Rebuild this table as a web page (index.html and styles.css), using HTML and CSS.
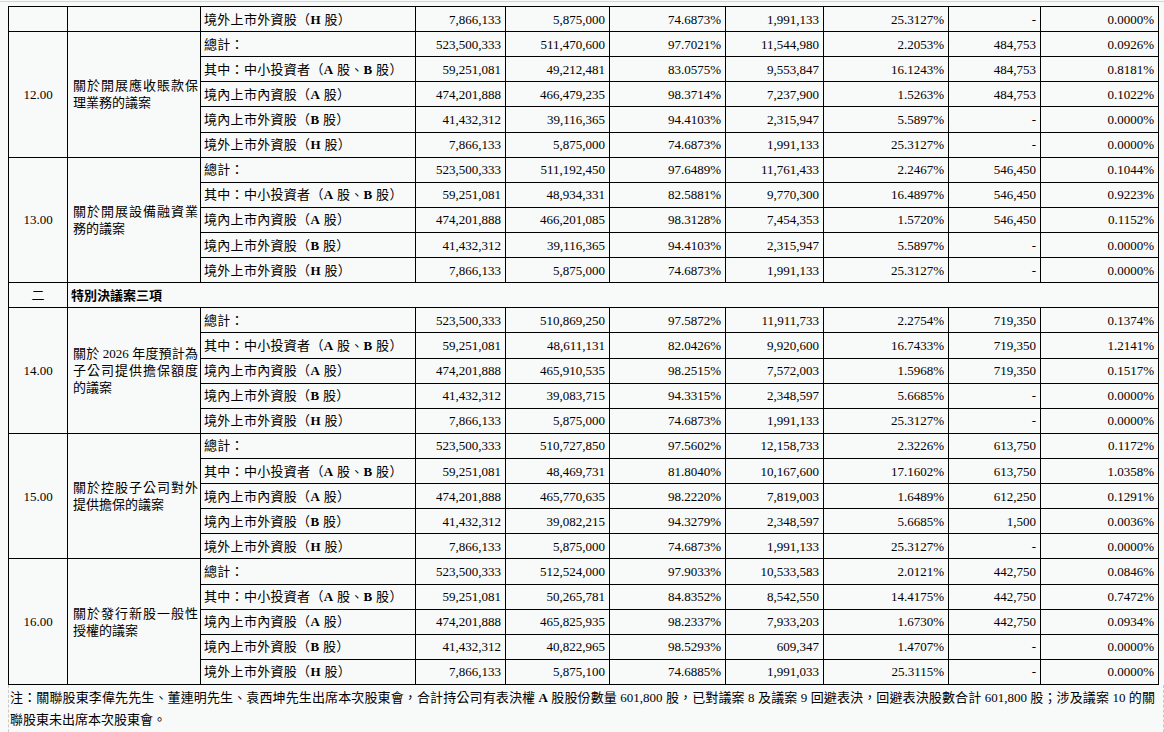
FILE: index.html
```html
<!DOCTYPE html>
<html lang="zh-Hant">
<head>
<meta charset="utf-8">
<title>議案表決結果</title>
<link rel="stylesheet" href="styles.css">
</head>
<body>
<div class="page">
<table class="votes">
<colgroup>
<col class="c-no"><col class="c-name"><col class="c-type"><col class="c-n1"><col class="c-n2"><col class="c-n3"><col class="c-n4"><col class="c-n5"><col class="c-n6"><col class="c-n7">
</colgroup>
<tbody>
<tr><td></td><td></td><td class="type">境外上市外資股（<b>H</b> 股）</td><td>7,866,133</td><td>5,875,000</td><td>74.6873%</td><td>1,991,133</td><td>25.3127%</td><td>-</td><td>0.0000%</td></tr>

<tr><td class="no" rowspan="5">12.00</td><td class="name" rowspan="5">關於開展應收賬款保理業務的議案</td><td class="type">總計：</td><td>523,500,333</td><td>511,470,600</td><td>97.7021%</td><td>11,544,980</td><td>2.2053%</td><td>484,753</td><td>0.0926%</td></tr>
<tr><td class="type">其中：中小投資者（<b>A</b> 股、<b>B</b> 股）</td><td>59,251,081</td><td>49,212,481</td><td>83.0575%</td><td>9,553,847</td><td>16.1243%</td><td>484,753</td><td>0.8181%</td></tr>
<tr><td class="type">境內上市內資股（<b>A</b> 股）</td><td>474,201,888</td><td>466,479,235</td><td>98.3714%</td><td>7,237,900</td><td>1.5263%</td><td>484,753</td><td>0.1022%</td></tr>
<tr><td class="type">境內上市外資股（<b>B</b> 股）</td><td>41,432,312</td><td>39,116,365</td><td>94.4103%</td><td>2,315,947</td><td>5.5897%</td><td>-</td><td>0.0000%</td></tr>
<tr><td class="type">境外上市外資股（<b>H</b> 股）</td><td>7,866,133</td><td>5,875,000</td><td>74.6873%</td><td>1,991,133</td><td>25.3127%</td><td>-</td><td>0.0000%</td></tr>

<tr><td class="no" rowspan="5">13.00</td><td class="name" rowspan="5">關於開展設備融資業務的議案</td><td class="type">總計：</td><td>523,500,333</td><td>511,192,450</td><td>97.6489%</td><td>11,761,433</td><td>2.2467%</td><td>546,450</td><td>0.1044%</td></tr>
<tr><td class="type">其中：中小投資者（<b>A</b> 股、<b>B</b> 股）</td><td>59,251,081</td><td>48,934,331</td><td>82.5881%</td><td>9,770,300</td><td>16.4897%</td><td>546,450</td><td>0.9223%</td></tr>
<tr><td class="type">境內上市內資股（<b>A</b> 股）</td><td>474,201,888</td><td>466,201,085</td><td>98.3128%</td><td>7,454,353</td><td>1.5720%</td><td>546,450</td><td>0.1152%</td></tr>
<tr><td class="type">境內上市外資股（<b>B</b> 股）</td><td>41,432,312</td><td>39,116,365</td><td>94.4103%</td><td>2,315,947</td><td>5.5897%</td><td>-</td><td>0.0000%</td></tr>
<tr><td class="type">境外上市外資股（<b>H</b> 股）</td><td>7,866,133</td><td>5,875,000</td><td>74.6873%</td><td>1,991,133</td><td>25.3127%</td><td>-</td><td>0.0000%</td></tr>

<tr class="section"><td class="no">二</td><td class="sec-title" colspan="9">特別決議案三項</td></tr>

<tr><td class="no" rowspan="5">14.00</td><td class="name" rowspan="5">關於 2026 年度預計為子公司提供擔保額度的議案</td><td class="type">總計：</td><td>523,500,333</td><td>510,869,250</td><td>97.5872%</td><td>11,911,733</td><td>2.2754%</td><td>719,350</td><td>0.1374%</td></tr>
<tr><td class="type">其中：中小投資者（<b>A</b> 股、<b>B</b> 股）</td><td>59,251,081</td><td>48,611,131</td><td>82.0426%</td><td>9,920,600</td><td>16.7433%</td><td>719,350</td><td>1.2141%</td></tr>
<tr><td class="type">境內上市內資股（<b>A</b> 股）</td><td>474,201,888</td><td>465,910,535</td><td>98.2515%</td><td>7,572,003</td><td>1.5968%</td><td>719,350</td><td>0.1517%</td></tr>
<tr><td class="type">境內上市外資股（<b>B</b> 股）</td><td>41,432,312</td><td>39,083,715</td><td>94.3315%</td><td>2,348,597</td><td>5.6685%</td><td>-</td><td>0.0000%</td></tr>
<tr><td class="type">境外上市外資股（<b>H</b> 股）</td><td>7,866,133</td><td>5,875,000</td><td>74.6873%</td><td>1,991,133</td><td>25.3127%</td><td>-</td><td>0.0000%</td></tr>

<tr><td class="no" rowspan="5">15.00</td><td class="name" rowspan="5">關於控股子公司對外提供擔保的議案</td><td class="type">總計：</td><td>523,500,333</td><td>510,727,850</td><td>97.5602%</td><td>12,158,733</td><td>2.3226%</td><td>613,750</td><td>0.1172%</td></tr>
<tr><td class="type">其中：中小投資者（<b>A</b> 股、<b>B</b> 股）</td><td>59,251,081</td><td>48,469,731</td><td>81.8040%</td><td>10,167,600</td><td>17.1602%</td><td>613,750</td><td>1.0358%</td></tr>
<tr><td class="type">境內上市內資股（<b>A</b> 股）</td><td>474,201,888</td><td>465,770,635</td><td>98.2220%</td><td>7,819,003</td><td>1.6489%</td><td>612,250</td><td>0.1291%</td></tr>
<tr><td class="type">境內上市外資股（<b>B</b> 股）</td><td>41,432,312</td><td>39,082,215</td><td>94.3279%</td><td>2,348,597</td><td>5.6685%</td><td>1,500</td><td>0.0036%</td></tr>
<tr><td class="type">境外上市外資股（<b>H</b> 股）</td><td>7,866,133</td><td>5,875,000</td><td>74.6873%</td><td>1,991,133</td><td>25.3127%</td><td>-</td><td>0.0000%</td></tr>

<tr><td class="no" rowspan="5">16.00</td><td class="name" rowspan="5">關於發行新股一般性授權的議案</td><td class="type">總計：</td><td>523,500,333</td><td>512,524,000</td><td>97.9033%</td><td>10,533,583</td><td>2.0121%</td><td>442,750</td><td>0.0846%</td></tr>
<tr><td class="type">其中：中小投資者（<b>A</b> 股、<b>B</b> 股）</td><td>59,251,081</td><td>50,265,781</td><td>84.8352%</td><td>8,542,550</td><td>14.4175%</td><td>442,750</td><td>0.7472%</td></tr>
<tr><td class="type">境內上市內資股（<b>A</b> 股）</td><td>474,201,888</td><td>465,825,935</td><td>98.2337%</td><td>7,933,203</td><td>1.6730%</td><td>442,750</td><td>0.0934%</td></tr>
<tr><td class="type">境內上市外資股（<b>B</b> 股）</td><td>41,432,312</td><td>40,822,965</td><td>98.5293%</td><td>609,347</td><td>1.4707%</td><td>-</td><td>0.0000%</td></tr>
<tr><td class="type">境外上市外資股（<b>H</b> 股）</td><td>7,866,133</td><td>5,875,100</td><td>74.6885%</td><td>1,991,033</td><td>25.3115%</td><td>-</td><td>0.0000%</td></tr>
</tbody>
</table>
<p class="note">注：關聯股東李偉先先生、董連明先生、袁西坤先生出席本次股東會，合計持公司有表決權 <b>A</b> 股股份數量 601,800 股，已對議案 8 及議案 9 回避表決，回避表決股數合計 601,800 股；涉及議案 10 的關聯股東未出席本次股東會。</p>
</div>
</body>
</html>
```

FILE: styles.css
```css
html, body {
  margin: 0;
  padding: 0;
}

body {
  background: #f8f9f9;
  color: #000;
  font-family: "Liberation Serif", "Noto Sans CJK TC", serif;
  font-size: 13px;
  height: 732px;
  overflow: hidden;
}

.page {
  margin-top: 1px;
  border-top: 1px solid #d4d4d4;
  padding: 4px 0 0 8px;
}

.votes {
  border-collapse: collapse;
  table-layout: fixed;
  width: 1151px;
  height: 679px;
}

.c-no { width: 59px; }
.c-name { width: 133px; }
.c-type { width: 215px; }
.c-n1 { width: 90px; }
.c-n2 { width: 104px; }
.c-n3 { width: 116px; }
.c-n4 { width: 98px; }
.c-n5 { width: 125px; }
.c-n6 { width: 92px; }
.c-n7 { width: 118px; }

.votes td {
  border: 1px solid #000;
  padding: 0 4px 0 4px;
  height: 24px;
  line-height: 17px;
  text-align: right;
  vertical-align: middle;
  white-space: nowrap;
}

.votes td.no {
  text-align: center;
  font-weight: normal;
}

.votes td.name {
  text-align: justify;
  white-space: normal;
  padding-left: 5px;
  padding-right: 2px;
}

.votes td.type {
  text-align: left;
  padding-left: 3px;
  letter-spacing: 0.3px;
}

.votes td.sec-title {
  text-align: left;
  font-weight: bold;
  padding-left: 3px;
}

.votes b {
  font-weight: bold;
}

.note {
  margin: 0;
  width: 1145px;
  padding: 2px 8px 0 1px;
  border-left: 1px dashed #c8c8c8;
  border-right: 1px dashed #c8c8c8;
  line-height: 22px;
  text-align: justify;
  height: 60px;
}
```
